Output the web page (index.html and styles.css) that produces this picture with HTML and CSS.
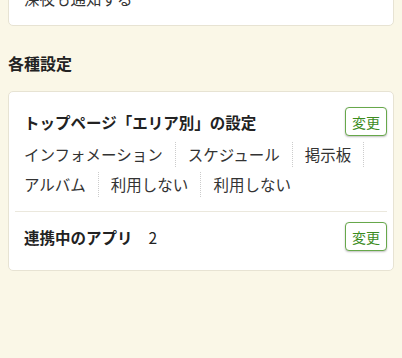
FILE: index.html
```html
<!DOCTYPE html>
<html lang="ja">
<head>
    <meta charset="UTF-8">
    <meta name="viewport" content="width=device-width, initial-scale=1.0">
    <title>各種設定</title>
    <link rel="stylesheet" href="styles.css">
</head>
<body>
    <div class="page">
        <div class="card notify-card">
            <p class="notify-text">深夜も通知する</p>
        </div>

        <h2 class="section-title">各種設定</h2>

        <div class="card">
            <div class="setting">
                <div class="setting-head">
                    <span class="setting-name">トップページ「エリア別」の設定</span>
                    <button class="change-btn">変更</button>
                </div>
                <ul class="tag-list">
                    <li>インフォメーション</li>
                    <li>スケジュール</li>
                    <li>掲示板</li>
                    <li>アルバム</li>
                    <li>利用しない</li>
                    <li>利用しない</li>
                </ul>
            </div>
            <div class="setting setting-apps">
                <div class="setting-head">
                    <span class="setting-name">連携中のアプリ<span class="count">2</span></span>
                    <button class="change-btn">変更</button>
                </div>
            </div>
        </div>
    </div>
</body>
</html>
```

FILE: styles.css
```css
:root {
    --bg-color: #faf7e7;
    --border-color: #e7e3d3;
    --text-color: #333;
    --green: #3c8c1e;
}

* {
    margin: 0;
    padding: 0;
    box-sizing: border-box;
}

body {
    font-family: 'Noto Sans CJK JP', 'Noto Sans', sans-serif;
    font-size: 15.5px;
    background-color: var(--bg-color);
    color: var(--text-color);
}

.page {
    margin-top: -40px;
    padding: 0 8px;
}

.card {
    background-color: white;
    border: 1px solid var(--border-color);
    border-radius: 5px;
    padding: 0 6px;
}

.notify-card {
    padding: 25px 15px 15px;
}

.notify-text {
    line-height: 24px;
}

.section-title {
    font-size: 16px;
    font-weight: bold;
    color: #222;
    line-height: 24px;
    margin: 25px 0 16px;
}

.setting {
    padding: 15px 0 14px 9px;
}

.setting-apps {
    border-top: 1px solid #ebe8dd;
    padding: 10px 0 19px 9px;
}

.setting-head {
    display: flex;
    justify-content: space-between;
    align-items: center;
}

.setting-name {
    font-weight: bold;
    color: #222;
}

.count {
    font-weight: normal;
    margin-left: 16px;
}

.change-btn {
    font-family: inherit;
    font-size: 14px;
    width: 42px;
    height: 29px;
    background-color: white;
    color: var(--green);
    border: 1px solid #67a84b;
    border-radius: 4px;
    box-shadow: 0 1px 2px rgba(0,0,0,0.25);
    cursor: pointer;
}

.tag-list {
    list-style: none;
    display: flex;
    flex-wrap: wrap;
    row-gap: 5px;
    margin-top: 6px;
}

.tag-list li {
    line-height: 25px;
    padding: 0 12px;
    border-right: 1px dotted #ccc;
}

.tag-list li:first-child,
.tag-list li:nth-child(4) {
    padding-left: 0;
}

.tag-list li:last-child {
    border-right: none;
}
```
